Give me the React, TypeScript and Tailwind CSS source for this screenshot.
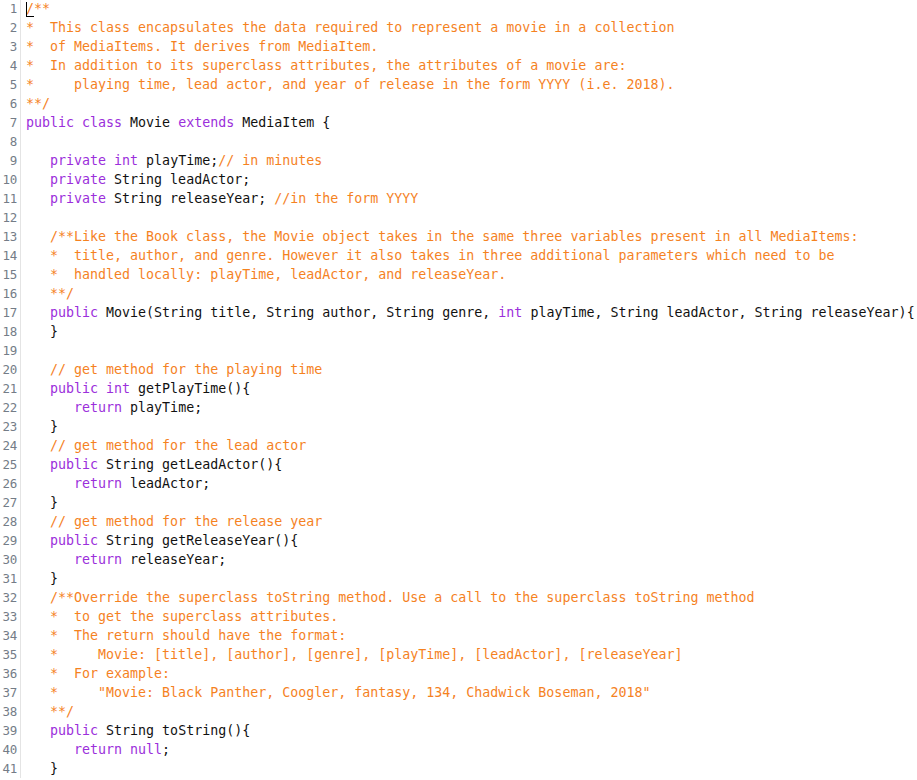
type Tok = [string, string];

const K = "k";
const C = "c";
const N = "n";

const lines: Tok[][] = [
  [[C, "/**"]],
  [[C, "*  This class encapsulates the data required to represent a movie in a collection"]],
  [[C, "*  of MediaItems. It derives from MediaItem."]],
  [[C, "*  In addition to its superclass attributes, the attributes of a movie are:"]],
  [[C, "*     playing time, lead actor, and year of release in the form YYYY (i.e. 2018)."]],
  [[C, "**/"]],
  [[K, "public class "], [N, "Movie "], [K, "extends "], [N, "MediaItem {"]],
  [],
  [[N, "   "], [K, "private int "], [N, "playTime;"], [C, "// in minutes"]],
  [[N, "   "], [K, "private "], [N, "String leadActor;"]],
  [[N, "   "], [K, "private "], [N, "String releaseYear; "], [C, "//in the form YYYY"]],
  [],
  [[N, "   "], [C, "/**Like the Book class, the Movie object takes in the same three variables present in all MediaItems:"]],
  [[N, "   "], [C, "*  title, author, and genre. However it also takes in three additional parameters which need to be"]],
  [[N, "   "], [C, "*  handled locally: playTime, leadActor, and releaseYear."]],
  [[N, "   "], [C, "**/"]],
  [
    [N, "   "],
    [K, "public "],
    [N, "Movie(String title, String author, String genre, "],
    [K, "int "],
    [N, "playTime, String leadActor, String releaseYear){"],
  ],
  [[N, "   }"]],
  [],
  [[N, "   "], [C, "// get method for the playing time"]],
  [[N, "   "], [K, "public int "], [N, "getPlayTime(){"]],
  [[N, "      "], [K, "return "], [N, "playTime;"]],
  [[N, "   }"]],
  [[N, "   "], [C, "// get method for the lead actor"]],
  [[N, "   "], [K, "public "], [N, "String getLeadActor(){"]],
  [[N, "      "], [K, "return "], [N, "leadActor;"]],
  [[N, "   }"]],
  [[N, "   "], [C, "// get method for the release year"]],
  [[N, "   "], [K, "public "], [N, "String getReleaseYear(){"]],
  [[N, "      "], [K, "return "], [N, "releaseYear;"]],
  [[N, "   }"]],
  [[N, "   "], [C, "/**Override the superclass toString method. Use a call to the superclass toString method"]],
  [[N, "   "], [C, "*  to get the superclass attributes."]],
  [[N, "   "], [C, "*  The return should have the format:"]],
  [[N, "   "], [C, "*     Movie: [title], [author], [genre], [playTime], [leadActor], [releaseYear]"]],
  [[N, "   "], [C, "*  For example:"]],
  [[N, "   "], [C, "*     \"Movie: Black Panther, Coogler, fantasy, 134, Chadwick Boseman, 2018\""]],
  [[N, "   "], [C, "**/"]],
  [[N, "   "], [K, "public "], [N, "String toString(){"]],
  [[N, "      "], [K, "return null"], [N, ";"]],
  [[N, "   }"]],
];

function tokClass(t: string) {
  if (t === K) return "text-[#9b2fdb]";
  if (t === C) return "text-[#f5821f]";
  return "text-[#111111]";
}

export default function App() {
  return (
    <div className="w-[917px] h-[780px] overflow-hidden bg-white font-['DejaVu_Sans_Mono',monospace] text-[13.3px] leading-[19px]">
      <div className="-mt-[1px]">
        {lines.map((toks, i) => (
          <div key={i} className="flex h-[19px]">
            <div className="w-[21px] shrink-0 pr-[3px] text-right text-[#747c87] border-r border-[#e4e4e4] text-[12.5px] tracking-[-0.3px]">
              {i + 1}
            </div>
            <div className="relative pl-[5px] whitespace-pre">
              {i === 0 && (
                <span className="absolute left-[5px] top-[3px] h-[15px] w-[8px] border-l border-b border-black" />
              )}
              {toks.map(([t, s], j) => (
                <span key={j} className={tokClass(t)}>
                  {s}
                </span>
              ))}
            </div>
          </div>
        ))}
      </div>
    </div>
  );
}
